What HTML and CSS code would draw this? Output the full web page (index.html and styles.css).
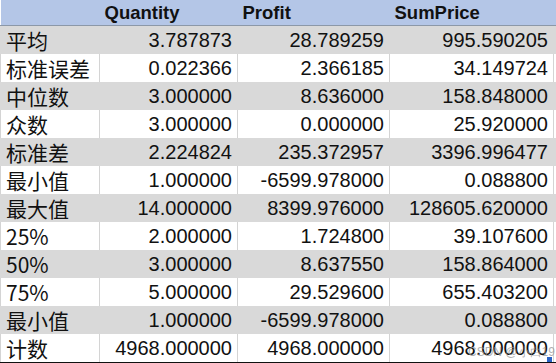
FILE: index.html
```html
<!DOCTYPE html>
<html lang="zh">
<head>
  <meta charset="UTF-8">
  <title>describe()</title>
  <link rel="stylesheet" href="styles.css">
</head>
<body>
  <div class="sheet">
    <table class="stats">
      <colgroup>
        <col class="c-label">
        <col class="c-qty">
        <col class="c-profit">
        <col class="c-sum">
        <col class="c-blank">
      </colgroup>
      <thead>
        <tr><th></th><th>Quantity</th><th>Profit</th><th>SumPrice</th><th></th></tr>
      </thead>
      <tbody>
        <tr class="shade"><td class="label">平均</td><td>3.787873</td><td>28.789259</td><td>995.590205</td><td></td></tr>
        <tr><td class="label">标准误差</td><td>0.022366</td><td>2.366185</td><td>34.149724</td><td></td></tr>
        <tr class="shade"><td class="label">中位数</td><td>3.000000</td><td>8.636000</td><td>158.848000</td><td></td></tr>
        <tr><td class="label">众数</td><td>3.000000</td><td>0.000000</td><td>25.920000</td><td></td></tr>
        <tr class="shade"><td class="label">标准差</td><td>2.224824</td><td>235.372957</td><td>3396.996477</td><td></td></tr>
        <tr><td class="label">最小值</td><td>1.000000</td><td>-6599.978000</td><td>0.088800</td><td></td></tr>
        <tr class="shade"><td class="label">最大值</td><td>14.000000</td><td>8399.976000</td><td>128605.620000</td><td></td></tr>
        <tr><td class="label">25%</td><td>2.000000</td><td>1.724800</td><td>39.107600</td><td></td></tr>
        <tr class="shade"><td class="label">50%</td><td>3.000000</td><td>8.637550</td><td>158.864000</td><td></td></tr>
        <tr><td class="label">75%</td><td>5.000000</td><td>29.529600</td><td>655.403200</td><td></td></tr>
        <tr class="shade"><td class="label">最小值</td><td>1.000000</td><td>-6599.978000</td><td>0.088800</td><td></td></tr>
        <tr><td class="label">计数</td><td>4968.000000</td><td>4968.000000</td><td>4968.000000</td><td></td></tr>
      </tbody>
    </table>
    <span class="watermark">CSDN @小白19</span>
    <span class="fill-handle"></span>
  </div>
</body>
</html>
```

FILE: styles.css
```css
body {
  margin: 0;
  background-color: #ffffff;
  font-family: "Liberation Sans", Arial, sans-serif;
  color: #111111;
}

.sheet {
  position: relative;
  width: 556px;
  height: 363px;
  overflow: hidden;
}

.stats {
  border-collapse: collapse;
  table-layout: fixed;
  width: 556px;
}

.c-label { width: 99px; }
.c-qty { width: 138px; }
.c-profit { width: 152px; }
.c-sum { width: 164px; }
.c-blank { width: 3px; }

.stats th {
  height: 25px;
  padding: 0 5px;
  background-color: #b4c6e7;
  border-bottom: 1px solid #8c98a8;
  text-align: left;
  font-size: 18.5px;
  font-weight: bold;
  line-height: 24px;
  white-space: nowrap;
}

.stats td {
  height: 28px;
  padding: 0 5px;
  border-left: 1px solid #d4d4d4;
  text-align: right;
  font-size: 20px;
  line-height: 26px;
  white-space: nowrap;
}

.stats tr.shade td {
  background-color: #d9d9d9;
  border-left-color: #d9d9d9;
}

.stats td.label {
  text-align: left;
  font-family: "Noto Sans CJK SC", sans-serif;
  font-size: 21px;
}

.stats tbody tr:last-child td {
  border-bottom: 1px solid #111111;
}

.watermark {
  position: absolute;
  left: 468px;
  top: 344px;
  font-size: 12px;
  color: rgba(150, 150, 150, 0.75);
  white-space: nowrap;
}

.fill-handle {
  position: absolute;
  left: 547px;
  top: 357px;
  width: 5px;
  height: 5px;
  background-color: #2a63c6;
}
```
